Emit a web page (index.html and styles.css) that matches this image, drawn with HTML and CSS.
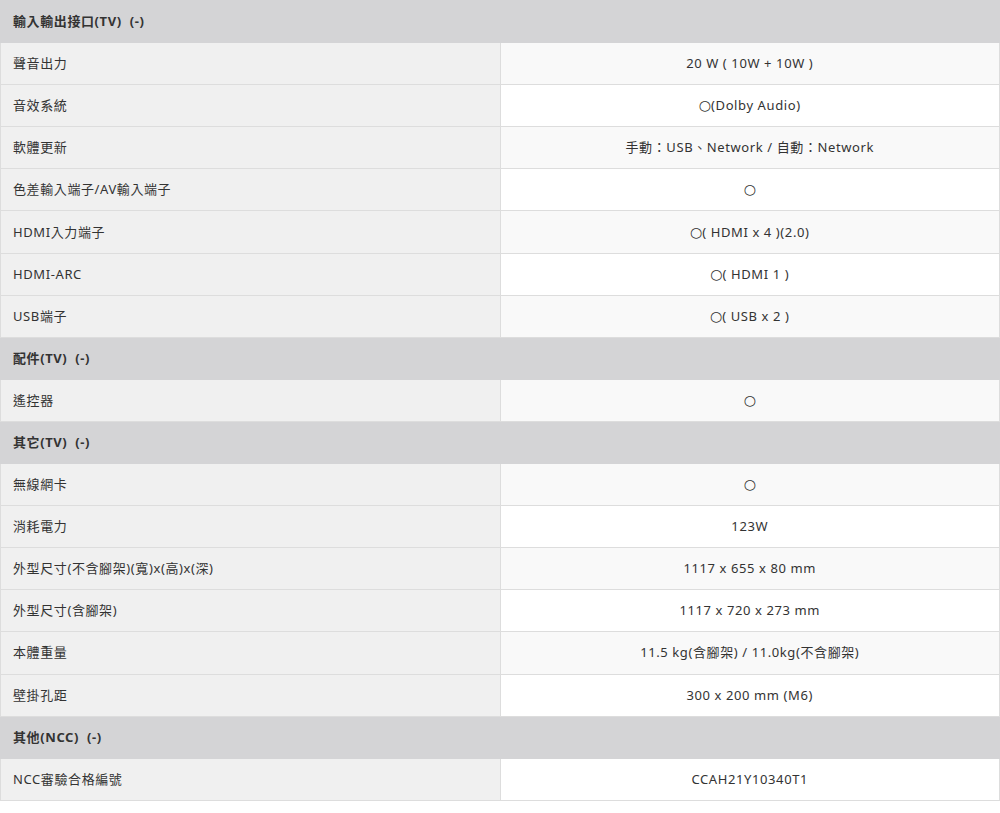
FILE: index.html
```html
<!DOCTYPE html>
<html lang="zh-Hant">
<head>
<meta charset="utf-8">
<link rel="stylesheet" href="styles.css">
</head>
<body>
<table class="spec">
<tbody>
<tr class="sec"><td colspan="2">輸入輸出接口(TV)&nbsp;&nbsp;(-)</td></tr>
<tr><td class="k">聲音出力</td><td class="v">20 W ( 10W + 10W )</td></tr>
<tr><td class="k">音效系統</td><td class="v"><span class="o">○</span>(Dolby Audio)</td></tr>
<tr><td class="k">軟體更新</td><td class="v">手動：USB、Network / 自動：Network</td></tr>
<tr><td class="k">色差輸入端子/AV輸入端子</td><td class="v"><span class="o">○</span></td></tr>
<tr><td class="k">HDMI入力端子</td><td class="v"><span class="o">○</span>( HDMI x 4 )(2.0)</td></tr>
<tr><td class="k">HDMI-ARC</td><td class="v"><span class="o">○</span>( HDMI 1 )</td></tr>
<tr><td class="k">USB端子</td><td class="v"><span class="o">○</span>( USB x 2 )</td></tr>
<tr class="sec"><td colspan="2">配件(TV)&nbsp;&nbsp;(-)</td></tr>
<tr><td class="k">遙控器</td><td class="v"><span class="o">○</span></td></tr>
<tr class="sec"><td colspan="2">其它(TV)&nbsp;&nbsp;(-)</td></tr>
<tr><td class="k">無線網卡</td><td class="v"><span class="o">○</span></td></tr>
<tr><td class="k">消耗電力</td><td class="v">123W</td></tr>
<tr><td class="k">外型尺寸(不含腳架)(寬)x(高)x(深)</td><td class="v">1117 x 655 x 80 mm</td></tr>
<tr><td class="k">外型尺寸(含腳架)</td><td class="v">1117 x 720 x 273 mm</td></tr>
<tr><td class="k">本體重量</td><td class="v">11.5 kg(含腳架) / 11.0kg(不含腳架)</td></tr>
<tr><td class="k">壁掛孔距</td><td class="v">300 x 200 mm (M6)</td></tr>
<tr class="sec"><td colspan="2">其他(NCC)&nbsp;&nbsp;(-)</td></tr>
<tr><td class="k">NCC審驗合格編號</td><td class="v">CCAH21Y10340T1</td></tr>
</tbody>
</table>
</body>
</html>
```

FILE: styles.css
```css
html, body {
  margin: 0;
  padding: 0;
  background: #ffffff;
}

.spec {
  width: 1000px;
  border-collapse: collapse;
  table-layout: fixed;
  font-family: "Noto Sans", "Noto Sans CJK TC", sans-serif;
  font-size: 13px;
  letter-spacing: 0.6px;
  color: #333333;
}

.spec td {
  height: 42.1px;
  box-sizing: border-box;
  padding: 0 12px 1px;
  border: 1px solid #dddddd;
  vertical-align: middle;
  line-height: 18px;
}

.spec td.k {
  width: 500px;
  background: #f0f0f0;
  text-align: left;
}

.spec td.v {
  background: #ffffff;
  text-align: center;
}

.spec tr:nth-child(even) td.v {
  background: #f9f9f9;
}

.spec tr.sec td {
  background: #d4d4d6;
  font-weight: bold;
  border-color: #d4d4d6;
}

.o {
  font-family: "DejaVu Sans", sans-serif;
  font-size: 14px;
  line-height: 18px;
  letter-spacing: 0;
}
```
